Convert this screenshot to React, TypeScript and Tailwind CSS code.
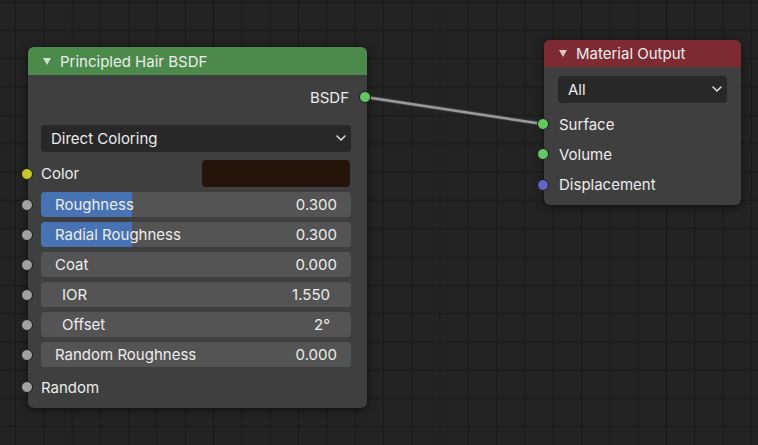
import type { ReactNode } from 'react'

// socket colours as Blender draws them
const SOCKET = {
  grey: 'bg-[#a1a1a1]',
  yellow: 'bg-[#c7c729]',
  green: 'bg-[#63c763]',
  purple: 'bg-[#6363c7]',
}

type SocketKind = keyof typeof SOCKET

const Socket = ({ kind, pos }: { kind: SocketKind; pos: string }) => (
  <span
    className={`absolute top-1/2 -translate-y-1/2 w-[12px] h-[12px] rounded-full border border-[#1a1a1a] ${SOCKET[kind]} ${pos}`}
  />
)

const Collapse = () => (
  <svg width="8" height="7" viewBox="0 0 8 7" className="shrink-0">
    <polygon points="0,0 8,0 4,7" fill="#ffffff" fillOpacity="0.72" />
  </svg>
)

const Chevron = () => (
  <svg width="10" height="6" viewBox="0 0 10 6" className="shrink-0">
    <polyline points="1,1 5,5 9,1" fill="none" stroke="#e0e0e0" strokeWidth="1.5" strokeLinecap="round" strokeLinejoin="round" />
  </svg>
)

const Dropdown = ({ label }: { label: string }) => (
  <div className="h-[26px] flex items-center justify-between pl-[10px] pr-[5px] rounded-[4px] bg-[#282828] shadow-[0_1px_0_rgba(0,0,0,0.35)]">
    <span>{label}</span>
    <Chevron />
  </div>
)

interface SliderRow {
  label: string
  value: string
  fill?: number
  number?: boolean
}

// rows below the colour field
const sliders: SliderRow[] = [
  { label: 'Roughness', value: '0.300', fill: 0.295 },
  { label: 'Radial Roughness', value: '0.300', fill: 0.295 },
  { label: 'Coat', value: '0.000', fill: 0 },
  { label: 'IOR', value: '1.550', number: true },
  { label: 'Offset', value: '2°', number: true },
  { label: 'Random Roughness', value: '0.000', fill: 0 },
]

const Slider = ({ row }: { row: SliderRow }) => (
  <div className="relative h-[25px] mt-[5px] ml-[13px] mr-[16px]">
    <div className="absolute inset-0 rounded-[4px] bg-[#545454]" />
    {row.fill ? (
      <div
        className="absolute left-0 top-0 bottom-0 rounded-l-[4px] bg-[#4772b3]"
        style={{ width: `${row.fill * 100}%` }}
      />
    ) : null}
    <div
      className={`relative h-full flex items-center justify-between ${
        row.number ? 'px-[21px]' : 'px-[14px]'
      }`}
    >
      <span>{row.label}</span>
      <span>{row.value}</span>
    </div>
    <Socket kind="grey" pos="left-[-20px]" />
  </div>
)

const Header = ({ title, color, height }: { title: string; color: string; height: string }) => (
  <div className={`${height} ${color} flex items-center gap-[9px] pl-[15px] rounded-t-[6px]`}>
    <Collapse />
    <span>{title}</span>
  </div>
)

const Row = ({ children, className = '' }: { children: ReactNode; className?: string }) => (
  <div className={`relative flex items-center ${className}`}>{children}</div>
)

const HairNode = () => (
  <div className="absolute left-[28px] top-[47px] w-[339px] h-[361px] rounded-[6px] bg-[#3f3f3f] shadow-[0_2px_8px_rgba(0,0,0,0.55)]">
    <Header title="Principled Hair BSDF" color="bg-[#4b8a4b]" height="h-[28px]" />

    {/* output */}
    <Row className="h-[26px] mt-[9px] justify-end pr-[18px]">
      <span>BSDF</span>
      <Socket kind="green" pos="right-[-4px]" />
    </Row>

    <div className="mt-[15px] ml-[13px] mr-[16px]">
      <Dropdown label="Direct Coloring" />
    </div>

    <Row className="h-[27px] mt-[9px] justify-between pl-[13px] pr-[17px]">
      <Socket kind="yellow" pos="left-[-7px]" />
      <span>Color</span>
      <div className="w-[148px] h-full rounded-[4px] bg-[#25140a]" />
    </Row>

    {sliders.map((row) => (
      <Slider key={row.label} row={row} />
    ))}

    <Row className="h-[26px] mt-[7px] pl-[13px]">
      <Socket kind="grey" pos="left-[-7px]" />
      <span>Random</span>
    </Row>
  </div>
)

const OutputNode = () => (
  <div className="absolute left-[544px] top-[40px] w-[197px] h-[165px] rounded-[6px] bg-[#3f3f3f] shadow-[0_2px_8px_rgba(0,0,0,0.55)]">
    <Header title="Material Output" color="bg-[#7e2a33]" height="h-[27px]" />

    <div className="mt-[9px] mx-[14px]">
      <Dropdown label="All" />
    </div>

    <div className="mt-[7px] flex flex-col">
      <Row className="h-[30px] pl-[15px]">
        <Socket kind="green" pos="left-[-7px]" />
        <span>Surface</span>
      </Row>
      <Row className="h-[30px] pl-[15px]">
        <Socket kind="green" pos="left-[-7px]" />
        <span>Volume</span>
      </Row>
      <Row className="h-[31px] pl-[15px]">
        <Socket kind="purple" pos="left-[-7px]" />
        <span>Displacement</span>
      </Row>
    </div>
  </div>
)

export default function App() {
  return (
    <div className="relative w-[758px] h-[445px] overflow-hidden bg-[#232323] text-[15px] leading-none text-[#ececec] font-['Inter','DejaVu_Sans',sans-serif]">
      {/* background grid + link */}
      <svg className="absolute inset-0" width="758" height="445">
        <defs>
          <pattern id="grid" x="15" y="30" width="28.3" height="28.3" patternUnits="userSpaceOnUse">
            <path d="M0.5 0 V28.3 M0 0.5 H28.3" stroke="#1a1a1a" strokeWidth="1.2" fill="none" />
          </pattern>
        </defs>
        <rect width="758" height="445" fill="url(#grid)" />
        <line x1="365" y1="97" x2="543" y2="124" stroke="#3a3a3a" strokeWidth="4.5" strokeLinecap="round" />
        <line x1="365" y1="97" x2="543" y2="124" stroke="#9a9a9a" strokeWidth="2.5" strokeLinecap="round" />
      </svg>

      <HairNode />
      <OutputNode />
    </div>
  )
}
